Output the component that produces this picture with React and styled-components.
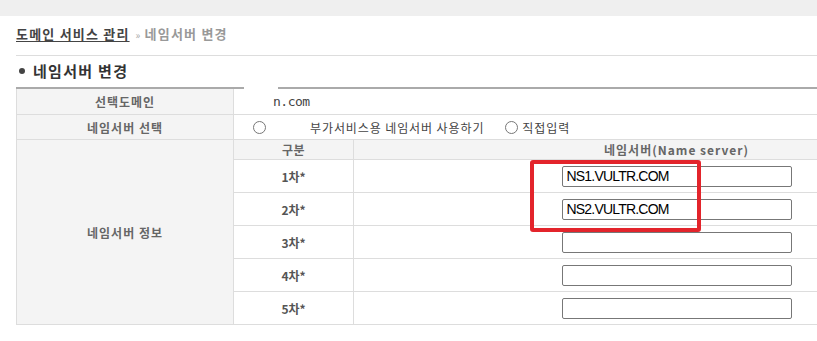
import React from "react";
import styled, { createGlobalStyle } from "styled-components";

const GlobalStyle = createGlobalStyle`
  html, body {
    margin: 0;
    padding: 0;
    background: #fff;
    overflow: hidden;
  }
  body {
    font-family: "Noto Sans CJK KR", "Noto Sans", sans-serif;
    color: #333;
  }
`;

const TopBand = styled.div`
  height: 16px;
  background: #efefef;
`;

const Content = styled.div`
  position: relative;
  margin-left: 16px;
  width: 1100px;
`;

const Breadcrumb = styled.div`
  padding: 8px 0 10px;
  line-height: 20px;
  font-size: 13px;
  letter-spacing: 1.2px;
  border-bottom: 1px solid #ddd;
  a {
    color: #444;
    font-weight: bold;
    text-decoration: underline;
    text-underline-offset: 2px;
  }
  span {
    color: #999;
    font-weight: bold;
  }
  i {
    font-style: normal;
    font-size: 10px;
    color: #aaa;
    margin: 0 3px 0 6px;
  }
`;

const Heading = styled.h3`
  margin: 5px 0 6px;
  font-size: 15px;
  line-height: 20px;
  font-weight: bold;
  letter-spacing: 1.3px;
  color: #333;
  display: flex;
  align-items: center;
  &::before {
    content: "";
    width: 6px;
    height: 6px;
    border-radius: 50%;
    background: #444;
    margin: 0 8px 0 3px;
  }
`;

const Table = styled.table`
  width: 984px;
  border-collapse: collapse;
  border-top: 2px solid #aaa;
  table-layout: fixed;
  font-size: 12px;
`;

const Th = styled.th`
  background: #f4f4f4;
  border: 1px solid #ddd;
  border-top: none;
  color: #666;
  font-weight: bold;
  letter-spacing: ${(p) => (p.$wide ? "1px" : "0.5px")};
  height: ${(p) => p.$h || 24}px;
  padding: 0;
  text-align: center;
`;

const Td = styled.td`
  border: 1px solid #ddd;
  border-top: none;
  height: ${(p) => p.$h || 24}px;
  padding: 0;
  text-align: ${(p) => p.$align || "left"};
  color: ${(p) => (p.$bold ? "#555" : "#333")};
  font-weight: ${(p) => (p.$bold ? "bold" : "normal")};
`;

const Domain = styled.div`
  padding-left: 39px;
  font-size: 13px;
  color: #444;
  font-family: "DejaVu Sans Mono", monospace;
  letter-spacing: -0.5px;
`;

const RadioRow = styled.div`
  display: flex;
  align-items: center;
  padding-left: 19px;
  color: #444;
`;

const Radio = styled.span`
  width: 11px;
  height: 11px;
  border: 1px solid #777;
  border-radius: 50%;
  background: #fff;
  flex: none;
  margin-right: ${(p) => p.$gap}px;
`;

const RadioLabel = styled.span`
  letter-spacing: 0.9px;
  margin-right: ${(p) => p.$gap || 0}px;
`;

const Input = styled.input`
  display: block;
  margin: 0 auto;
  width: 230px;
  height: 21px;
  box-sizing: border-box;
  border: 1px solid #777;
  border-radius: 2px;
  padding: 0 4px;
  font-family: "Liberation Sans", Arial, sans-serif;
  font-size: 14px;
  letter-spacing: -0.8px;
  color: #000;
  background: #fff;
  outline: none;
`;

const Redact = styled.div`
  position: absolute;
  left: 228px;
  top: 68px;
  width: 34px;
  height: 8px;
  background: #fff;
`;

const Highlight = styled.div`
  position: absolute;
  left: 514px;
  top: 144px;
  width: 171px;
  height: 72px;
  box-sizing: border-box;
  border: 4px solid #e3242b;
  border-radius: 3px;
  pointer-events: none;
`;

const servers = ["NS1.VULTR.COM", "NS2.VULTR.COM", "", "", ""];

export default function App() {
  return (
    <>
      <GlobalStyle />
      <TopBand />
      <Content>
        <Breadcrumb>
          <a>도메인 서비스 관리</a>
          <i>»</i>
          <span>네임서버 변경</span>
        </Breadcrumb>
        <Heading>네임서버 변경</Heading>
        <Table>
          <colgroup>
            <col style={{ width: 217 }} />
            <col style={{ width: 120 }} />
            <col />
          </colgroup>
          <tbody>
            <tr>
              <Th $h={25} $wide>선택도메인</Th>
              <Td $h={25} colSpan={2}>
                <Domain>n.com</Domain>
              </Td>
            </tr>
            <tr>
              <Th $h={24} $wide>네임서버 선택</Th>
              <Td $h={24} colSpan={2}>
                <RadioRow>
                  <Radio $gap={44} />
                  <RadioLabel $gap={21}>부가서비스용 네임서버 사용하기</RadioLabel>
                  <Radio $gap={4} />
                  <RadioLabel>직접입력</RadioLabel>
                </RadioRow>
              </Td>
            </tr>
            <tr>
              <Th rowSpan={6} $wide>네임서버 정보</Th>
              <Th $h={19}>구분</Th>
              <Th $h={19} $wide>네임서버(Name server)</Th>
            </tr>
            {servers.map((ns, i) => (
              <tr key={i}>
                <Td $h={32} $align="center" $bold>
                  {i + 1}차*
                </Td>
                <Td $h={32}>
                  <Input defaultValue={ns} />
                </Td>
              </tr>
            ))}
          </tbody>
        </Table>
        <Redact />
        <Highlight />
      </Content>
    </>
  );
}
